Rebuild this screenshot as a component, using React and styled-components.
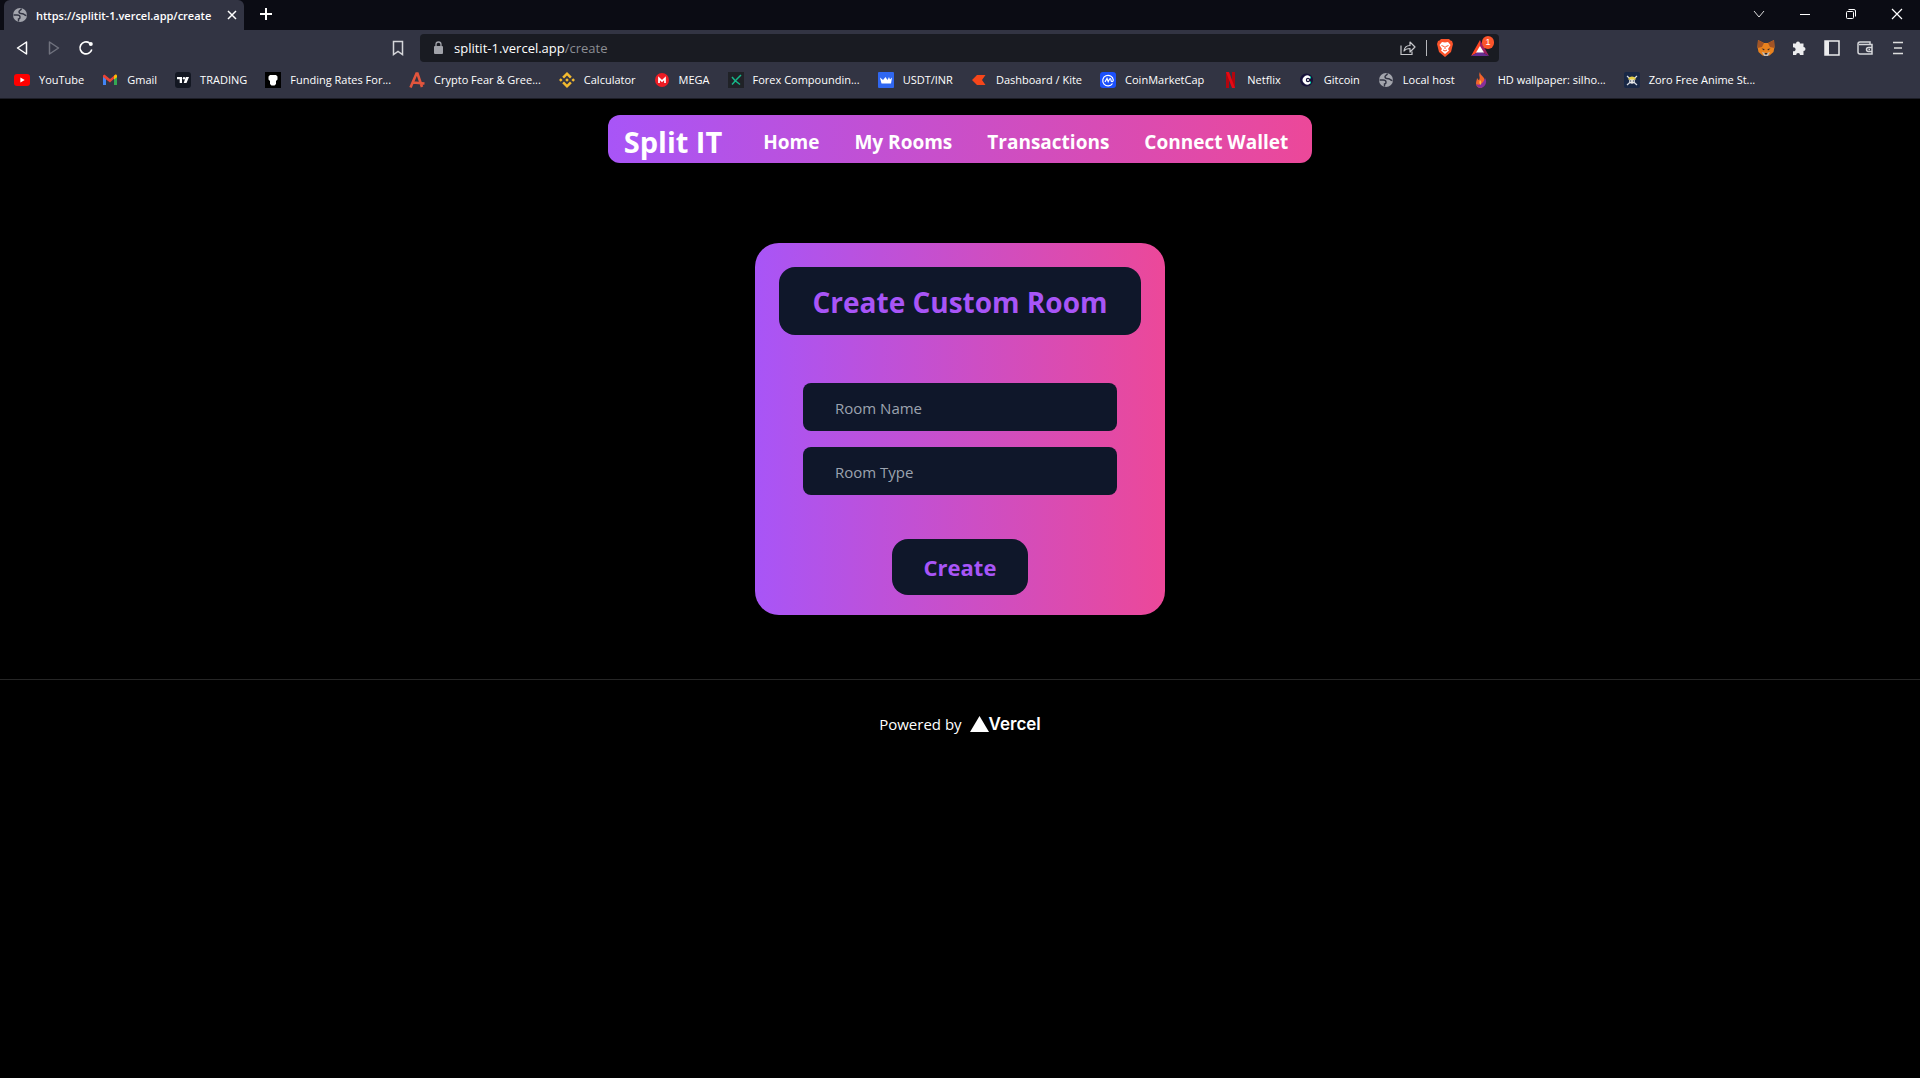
import React from "react";
import styled, { createGlobalStyle } from "styled-components";

const GlobalStyle = createGlobalStyle`
  * {
    box-sizing: border-box;
  }

  body {
    margin: 0;
    background-color: #000000;
    color: #ffffff;
    font-family: "Segoe UI", "Open Sans", sans-serif;
  }

  button,
  input {
    font-family: inherit;
  }
`;

const Globe = ({ size = 16 }) => (
  <svg width={size} height={size} viewBox="0 0 16 16">
    <circle cx="8" cy="8" r="7" fill="#a3a5ad" />
    <path
      d="M14.500 8.500c-2.500 0-2-1.800-4-1.800S7 6.200 7 4.800S9 3.500 9.500 1.500M1.500 8h3.500c2 0 3 .6 3 2S7 12 6.500 12v2.500"
      fill="none"
      stroke="#323443"
      strokeWidth="1.400"
    />
  </svg>
);

const bookmarks = [
  {
    label: "YouTube",
    icon: (
      <>
        <rect y="2" width="16" height="12" rx="3" fill="#ff0000" />
        <path d="M6.400 5.400v5.200L10.700 8z" fill="#fff" />
      </>
    ),
  },
  {
    label: "Gmail",
    icon: (
      <>
        <path d="M1 4v9h3V6.500z" fill="#4285f4" />
        <path d="M15 4v9h-3V6.500z" fill="#34a853" />
        <path d="M1 3.500L2.500 2.500L8 7l5.500-4.500L15 4L8 10.500L1 5z" fill="#ea4335" />
        <path d="M12 3.700l1.500-1.200c.8-.3 1.500.5 1.500 1.500v1.200l-3 2.300z" fill="#fbbc04" />
      </>
    ),
  },
  {
    label: "TRADING",
    icon: (
      <>
        <rect width="16" height="16" rx="3" fill="#131722" />
        <path d="M2 5h5v6H4.700V7.300H2zM10.800 5H14l-2.500 6H8.700z" fill="#fff" />
        <circle cx="9" cy="6.200" r="1.200" fill="#fff" />
      </>
    ),
  },
  {
    label: "Funding Rates For...",
    icon: (
      <>
        <rect width="16" height="16" fill="#000" />
        <path d="M5 3h6l1.500 1.500v3L11 9v3l-1.500 1.500h-3L5 12V9L3.500 7.500v-3z" fill="#fff" />
      </>
    ),
  },
  {
    label: "Crypto Fear & Gree...",
    icon: <path d="M1.500 15.500L7.500 1.500h1l4.500 13.500M4 10.500l11.500 1" fill="none" stroke="#e2553d" strokeWidth="2.600" />,
  },
  {
    label: "Calculator",
    icon: (
      <g fill="#f3ba2f">
        <path d="M8 0l4.800 4.800L11 6.600l-3-3l-3 3l-1.800-1.800z" />
        <path d="M8 16l4.800-4.800L11 9.400l-3 3l-3-3l-1.800 1.800z" />
        <path d="M8 6.200L9.800 8L8 9.800L6.200 8zM1.800 6.200L3.600 8L1.800 9.800L0 8zM14.200 6.200L16 8l-1.800 1.800L12.400 8z" />
      </g>
    ),
  },
  {
    label: "MEGA",
    icon: (
      <>
        <circle cx="8" cy="8" r="7" fill="#ed1c24" />
        <path d="M5 11V6.200L8 9l3-2.800V11" fill="none" stroke="#fff" strokeWidth="1.700" />
      </>
    ),
  },
  {
    label: "Forex Compoundin...",
    icon: (
      <>
        <rect width="16" height="16" fill="#202227" />
        <path d="M4 5l3 3.500l5 4M13 3L9 7l-5 5.500" fill="none" stroke="#16b88a" strokeWidth="1.500" />
      </>
    ),
  },
  {
    label: "USDT/INR",
    icon: (
      <>
        <rect width="16" height="16" rx="1" fill="#3067f0" />
        <path d="M2 5.500l3 2.500l2.500-3L9.500 8l1.500-3l1 2.500l2-2l-1 6H3.500z" fill="#fff" />
      </>
    ),
  },
  {
    label: "Dashboard / Kite",
    icon: <path d="M6 3h8.500l-3.500 5l3.500 5H6L1 8z" fill="#f6461a" />,
  },
  {
    label: "CoinMarketCap",
    icon: (
      <>
        <rect width="16" height="16" rx="3" fill="#1c50fb" />
        <path
          d="M12.500 11.500A5.300 5.300 0 1 1 13.300 8c0 2-2.300 2-2.300 .3C11 6 9.800 6 9 8l-.8 1.500L7 6.500L5 10"
          fill="none"
          stroke="#fff"
          strokeWidth="1.200"
        />
      </>
    ),
  },
  {
    label: "Netflix",
    icon: (
      <>
        <path d="M4 0h3v16H4zM10 0h3v16h-3z" fill="#b1060f" />
        <path d="M4 0h3l6 16h-3z" fill="#e50914" />
      </>
    ),
  },
  {
    label: "Gitcoin",
    icon: (
      <>
        <circle cx="7.500" cy="8" r="6.500" fill="#17123a" />
        <path d="M11 4.500A4.500 4.500 0 1 0 11 11.500" fill="#fff" />
        <circle cx="9" cy="8" r="2.200" fill="#17123a" />
        <circle cx="9" cy="8" r="1" fill="#fff" />
        <path d="M11.500 4.500v2M11.500 9.500v2" stroke="#02e2ac" />
      </>
    ),
  },
  { label: "Local host", icon: <Globe /> },
  {
    label: "HD wallpaper: silho...",
    icon: (
      <>
        <path d="M7 0c0 4 5 4 5 10c0 3-2 5-4 6c-3 0-5-2-5-5c0-2 1-3 1-5c1 1 1 2 2 2c2-3-1-4 1-8z" fill="#f2632b" />
        <path d="M12 6c3 5-.5 9-4 10c-3 0-4.500-2-4.800-4c3 2 7 0 8.800-6z" fill="#87309b" />
        <path d="M7 8c2 2 1 3 1 5c-2-1-2-3-1-5z" fill="#ffc13d" />
      </>
    ),
  },
  {
    label: "Zoro Free Anime St...",
    icon: (
      <>
        <rect width="16" height="16" rx="2" fill="#192846" />
        <path d="M3 4l10 9M13 4L3 13" stroke="#d8dce3" strokeWidth="1.200" />
        <circle cx="8" cy="9" r="2.800" fill="#e9e9e9" />
        <path d="M4 7.500c1-4 7-4 8 0z" fill="#e6cf45" />
        <path d="M6 9h1.200M8.800 9H10" stroke="#192846" strokeWidth="1.200" />
      </>
    ),
  },
];

const navLinks = ["Home", "My Rooms", "Transactions", "Connect Wallet"];

function BrowserBar() {
  return (
    <Browser>
      <TabStrip>
        <Tab>
          <Globe />
          <TabTitle>https://splitit-1.vercel.app/create</TabTitle>
          <IconButton aria-label="Close tab">
            <svg width="10" height="10" viewBox="0 0 10 10">
              <path d="M1 1l8 8M9 1l-8 8" stroke="#fff" strokeWidth="1.500" />
            </svg>
          </IconButton>
        </Tab>
        <IconButton aria-label="New tab">
          <svg width="12" height="12" viewBox="0 0 12 12">
            <path d="M6 0v12M0 6h12" stroke="#fff" strokeWidth="2" />
          </svg>
        </IconButton>
        <WindowControls>
          <IconButton aria-label="Search tabs">
            <svg width="12" height="12" viewBox="0 0 12 12">
              <path d="M1 3l5 6l5-6" fill="none" stroke="#ddd" />
            </svg>
          </IconButton>
          <IconButton aria-label="Minimize">
            <svg width="12" height="12" viewBox="0 0 12 12">
              <path d="M1 6.500h10" stroke="#fff" />
            </svg>
          </IconButton>
          <IconButton aria-label="Restore">
            <svg width="12" height="12" viewBox="0 0 12 12" fill="none" stroke="#fff">
              <rect x="1.500" y="3.500" width="7" height="7" rx="1" />
              <path d="M3.500 1.500h5.500a1.500 1.500 0 0 1 1.500 1.500v5.500" />
            </svg>
          </IconButton>
          <IconButton aria-label="Close window">
            <svg width="12" height="12" viewBox="0 0 12 12">
              <path d="M1 1l10 10M11 1L1 11" stroke="#fff" strokeWidth="1.200" />
            </svg>
          </IconButton>
        </WindowControls>
      </TabStrip>

      <Toolbar>
        <ToolGroup>
          <IconButton aria-label="Back">
            <svg width="16" height="16" viewBox="0 0 16 16">
              <path d="M12.500 2v12L3.500 8z" fill="none" stroke="#fff" strokeWidth="1.500" strokeLinejoin="round" />
            </svg>
          </IconButton>
          <IconButton aria-label="Forward">
            <svg width="16" height="16" viewBox="0 0 16 16">
              <path d="M3.500 2v12L12.500 8z" fill="none" stroke="#70727e" strokeWidth="1.500" strokeLinejoin="round" />
            </svg>
          </IconButton>
          <IconButton aria-label="Reload">
            <svg width="16" height="16" viewBox="0 0 16 16">
              <path d="M13.800 9.500A6 6 0 1 1 11.500 3" fill="none" stroke="#fff" strokeWidth="1.600" />
              <circle cx="12.800" cy="4" r="2" fill="#fff" />
            </svg>
          </IconButton>
        </ToolGroup>
        <IconButton aria-label="Bookmark this tab">
          <svg width="16" height="16" viewBox="0 0 16 16">
            <path d="M3.500 1.500h9v13L8 11.500l-4.500 3z" fill="none" stroke="#d5d6da" strokeWidth="1.500" />
          </svg>
        </IconButton>
        <AddressBar>
          <svg width="10" height="14" viewBox="0 0 10 14">
            <rect y="5" width="9" height="8" rx="1" fill="#a0a2a9" />
            <path d="M2 6V3.500a2.500 2.500 0 0 1 5 0V6" fill="none" stroke="#a0a2a9" strokeWidth="1.300" />
          </svg>
          <Url>
            splitit-1.vercel.app<UrlPath>/create</UrlPath>
          </Url>
          <IconButton aria-label="Share">
            <svg width="16" height="16" viewBox="0 0 16 16" fill="none" stroke="#c6c7cb" strokeWidth="1.200">
              <path d="M1 5.500v9h11v-3" />
              <path d="M4 11c.5-4 3-5.500 6-5.500V2l5 5l-5 5V8.500c-2.500 0-4.500.5-6 2.500z" strokeLinejoin="round" />
            </svg>
          </IconButton>
          <Divider />
          <IconButton aria-label="Brave Shields">
            <svg width="16" height="18" viewBox="0 0 16 18">
              <path d="M4 0h8l1.500 1.500L15 2l1 3l-2 8l-6 5l-6-5L0 5l1-3l1.500-.5z" fill="#fb542b" />
              <path d="M5 3l3 .5L11 3l2.500 3l-2.500 4l1 1.500L8 15l-4-3.500L5 10L2.500 6z" fill="#fff" />
              <path d="M4.500 6.500l2.500 1M11.500 6.500l-2.500 1M8 7v3M6 11l2 1l2-1" stroke="#fb542b" fill="none" />
            </svg>
          </IconButton>
          <Rewards aria-label="Brave Rewards">
            <svg width="18" height="18" viewBox="0 0 18 18">
              <path d="M9 1L0 17l9-5z" fill="#ff4724" />
              <path d="M9 1l9 16l-9-5z" fill="#9e1f63" />
              <path d="M0 17h18l-9-5z" fill="#662d91" />
              <path d="M9 7l4 6.500H5z" fill="#fff" />
            </svg>
            <Badge>1</Badge>
          </Rewards>
        </AddressBar>
        <Extensions>
          <IconButton aria-label="MetaMask">
            <svg width="18" height="18" viewBox="0 0 18 18">
              <path d="M1 1l6 3h4l6-3l.5 7l-1 5l-4 3.500h-7L1.500 13L.5 8z" fill="#e8821e" />
              <path d="M1 1l6 3l-2 4l-4.500 1zM17 1l-6 3l2 4l4.500 1z" fill="#a35425" />
              <path d="M5 13l3 1h2l3-1l-2 4H7z" fill="#c9c0b8" />
              <path d="M4.500 9.500l3 .5l-.5 1.500zM13.500 9.500l-3 .5l.5 1.500zM7.500 14h3l-.5 1.500H8z" fill="#30292b" />
            </svg>
          </IconButton>
          <IconButton aria-label="Extensions">
            <svg width="18" height="18" viewBox="0 0 18 18">
              <path
                d="M3 4.500h3a2 2 0 1 1 4 0h3.500V8a2 2 0 1 1 0 4v4H10a1.900 1.900 0 1 0-3.800 0H3v-3.800a2 2 0 1 0 0-3.800z"
                fill="#ececee"
              />
            </svg>
          </IconButton>
          <IconButton aria-label="Sidebar">
            <svg width="18" height="18" viewBox="0 0 18 18">
              <path d="M2 2h14v14H2z" fill="none" stroke="#ececee" strokeWidth="1.500" />
              <path d="M2 2h4v14H2z" fill="#ececee" />
            </svg>
          </IconButton>
          <IconButton aria-label="Wallet">
            <svg width="18" height="18" viewBox="0 0 18 18" fill="none" stroke="#d5d6da" strokeWidth="1.500">
              <path d="M14 5V3H4A2 2 0 0 0 2 5v8a2 2 0 0 0 2 2h12V5.500H3" />
              <path d="M16 8.500h-3.500a2 2 0 0 0 0 4H16" />
              <path d="M12.500 10.500h1.500" />
            </svg>
          </IconButton>
          <IconButton aria-label="Menu">
            <svg width="18" height="18" viewBox="0 0 18 18">
              <path d="M4 3.500h10M5 9h8M4 14.500h10" stroke="#ddd" strokeWidth="1.500" />
            </svg>
          </IconButton>
        </Extensions>
      </Toolbar>

      <BookmarkBar>
        {bookmarks.map(({ label, icon }) => (
          <Bookmark key={label} href="#">
            <svg width="16" height="16" viewBox="0 0 16 16">
              {icon}
            </svg>
            {label}
          </Bookmark>
        ))}
      </BookmarkBar>
    </Browser>
  );
}

function App() {
  return (
    <>
      <GlobalStyle />
      <BrowserBar />
      <Navbar>
        <Brand href="#">Split IT</Brand>
        {navLinks.map((link) => (
          <NavLink key={link} href="#">
            {link}
          </NavLink>
        ))}
      </Navbar>
      <RoomForm onSubmit={(e) => e.preventDefault()}>
        <FormTitle>Create Custom Room</FormTitle>
        <Fields>
          <RoomInput aria-label="Room Name" placeholder="Room Name" />
          <RoomInput aria-label="Room Type" placeholder="Room Type" />
        </Fields>
        <CreateButton>Create</CreateButton>
      </RoomForm>
      <Footer>
        <FooterLink href="#">
          Powered by
          <VercelLogo>
            <svg width="19" height="16" viewBox="0 0 19 16">
              <path d="M9.500 0L19 16H0z" fill="#fff" />
            </svg>
            Vercel
          </VercelLogo>
        </FooterLink>
      </Footer>
    </>
  );
}

export default App;

const Browser = styled.header`
  background-color: #323443;
  border-bottom: 1px solid #1c1d26;
`;

const IconButton = styled.button`
  display: flex;
  align-items: center;
  justify-content: center;
  padding: 0;
  border: none;
  background: none;
`;

const TabStrip = styled.div`
  display: flex;
  align-items: center;
  gap: 16px;
  height: 30px;
  padding: 0 17px 2px 4px;
  background-color: #0b0c14;
`;

const Tab = styled.div`
  display: flex;
  align-items: center;
  align-self: flex-start;
  gap: 8px;
  width: 240px;
  height: 30px;
  padding: 0 7px 0 8px;
  border-radius: 6px 6px 0 0;
  background-color: #323443;
`;

const TabTitle = styled.span`
  flex: 1;
  font-size: 11px;
  font-weight: 600;
  white-space: nowrap;
`;

const WindowControls = styled.div`
  display: flex;
  gap: 34px;
  margin-left: auto;
`;

const Toolbar = styled.div`
  display: flex;
  align-items: center;
  height: 36px;
  padding: 0 13px 0 14px;
`;

const ToolGroup = styled.div`
  display: flex;
  gap: 16px;
  flex: 1;
`;

const AddressBar = styled.div`
  display: flex;
  align-items: center;
  gap: 10px;
  flex: none;
  width: 57%;
  max-width: 1080px;
  height: 28px;
  margin-left: 14px;
  padding: 0 6px 0 14px;
  border-radius: 4px;
  background-color: #191b22;
`;

const Url = styled.span`
  flex: 1;
  font-size: 13px;
`;

const UrlPath = styled.span`
  color: #8b8d93;
`;

const Divider = styled.span`
  width: 1px;
  height: 16px;
  background-color: #b6b7bb;
`;

const Rewards = styled(IconButton)`
  position: relative;
  margin: 0 4px 0 8px;
`;

const Badge = styled.span`
  position: absolute;
  top: -3px;
  right: -5px;
  width: 12px;
  border-radius: 6px;
  background-color: #fb542b;
  color: #ffffff;
  font-family: "Liberation Sans", sans-serif;
  font-size: 9px;
  line-height: 13px;
`;

const Extensions = styled.div`
  display: flex;
  align-items: center;
  justify-content: flex-end;
  gap: 15px;
  width: 408px;
`;

const BookmarkBar = styled.nav`
  display: flex;
  align-items: center;
  gap: 18px;
  height: 32px;
  padding: 0 14px 4px;
`;

const Bookmark = styled.a`
  display: flex;
  align-items: center;
  gap: 9px;
  color: #ffffff;
  font-size: 11px;
  line-height: 14px;
  white-space: nowrap;
  text-decoration: none;
`;

const Navbar = styled.nav`
  display: flex;
  align-items: center;
  gap: 35px;
  width: fit-content;
  height: 48px;
  margin: 16px auto 80px;
  padding: 6px 24px 0 16px;
  border-radius: 12px;
  background: linear-gradient(to right, #a855f7, #ec4899);
`;

const NavLink = styled.a`
  color: #ffffff;
  font-size: 19px;
  font-weight: 700;
  text-decoration: none;
`;

const Brand = styled(NavLink)`
  margin-right: 6px;
  font-size: 29px;
  line-height: 38px;
`;

const RoomForm = styled.form`
  display: flex;
  flex-direction: column;
  align-items: center;
  width: fit-content;
  min-width: 410px;
  margin: 0 auto 64px;
  padding: 24px 24px 20px;
  border-radius: 24px;
  background: linear-gradient(to right, #a855f7, #ec4899);
`;

const FormTitle = styled.h1`
  align-self: stretch;
  margin: 0;
  padding: 17px 32px 15px;
  border-radius: 16px;
  background-color: #0f172a;
  color: #a855f7;
  font-size: 28px;
  line-height: 36px;
  text-align: center;
`;

const Fields = styled.div`
  display: flex;
  flex-direction: column;
  gap: 16px;
  align-self: stretch;
  padding: 48px 24px 44px;
`;

const RoomInput = styled.input`
  height: 48px;
  padding: 2px 32px 0;
  border: none;
  border-radius: 8px;
  background-color: #0f172a;
  color: #ffffff;
  font-size: 15px;

  &::placeholder {
    color: #9ca3af;
    opacity: 1;
  }
`;

const CreateButton = styled.button`
  height: 56px;
  padding: 0 32px;
  border: none;
  border-radius: 16px;
  background-color: #0f172a;
  color: #a855f7;
  font-size: 22px;
  font-weight: 700;
`;

const Footer = styled.footer`
  display: flex;
  justify-content: center;
  padding: 32px 0;
  border-top: 1px solid #262626;
`;

const FooterLink = styled.a`
  display: flex;
  align-items: center;
  gap: 8px;
  color: #ffffff;
  font-size: 15px;
  line-height: 24px;
  text-decoration: none;
`;

const VercelLogo = styled.span`
  display: flex;
  align-items: center;
  font-family: "Inter", sans-serif;
  font-size: 17px;
  font-weight: 600;
`;
